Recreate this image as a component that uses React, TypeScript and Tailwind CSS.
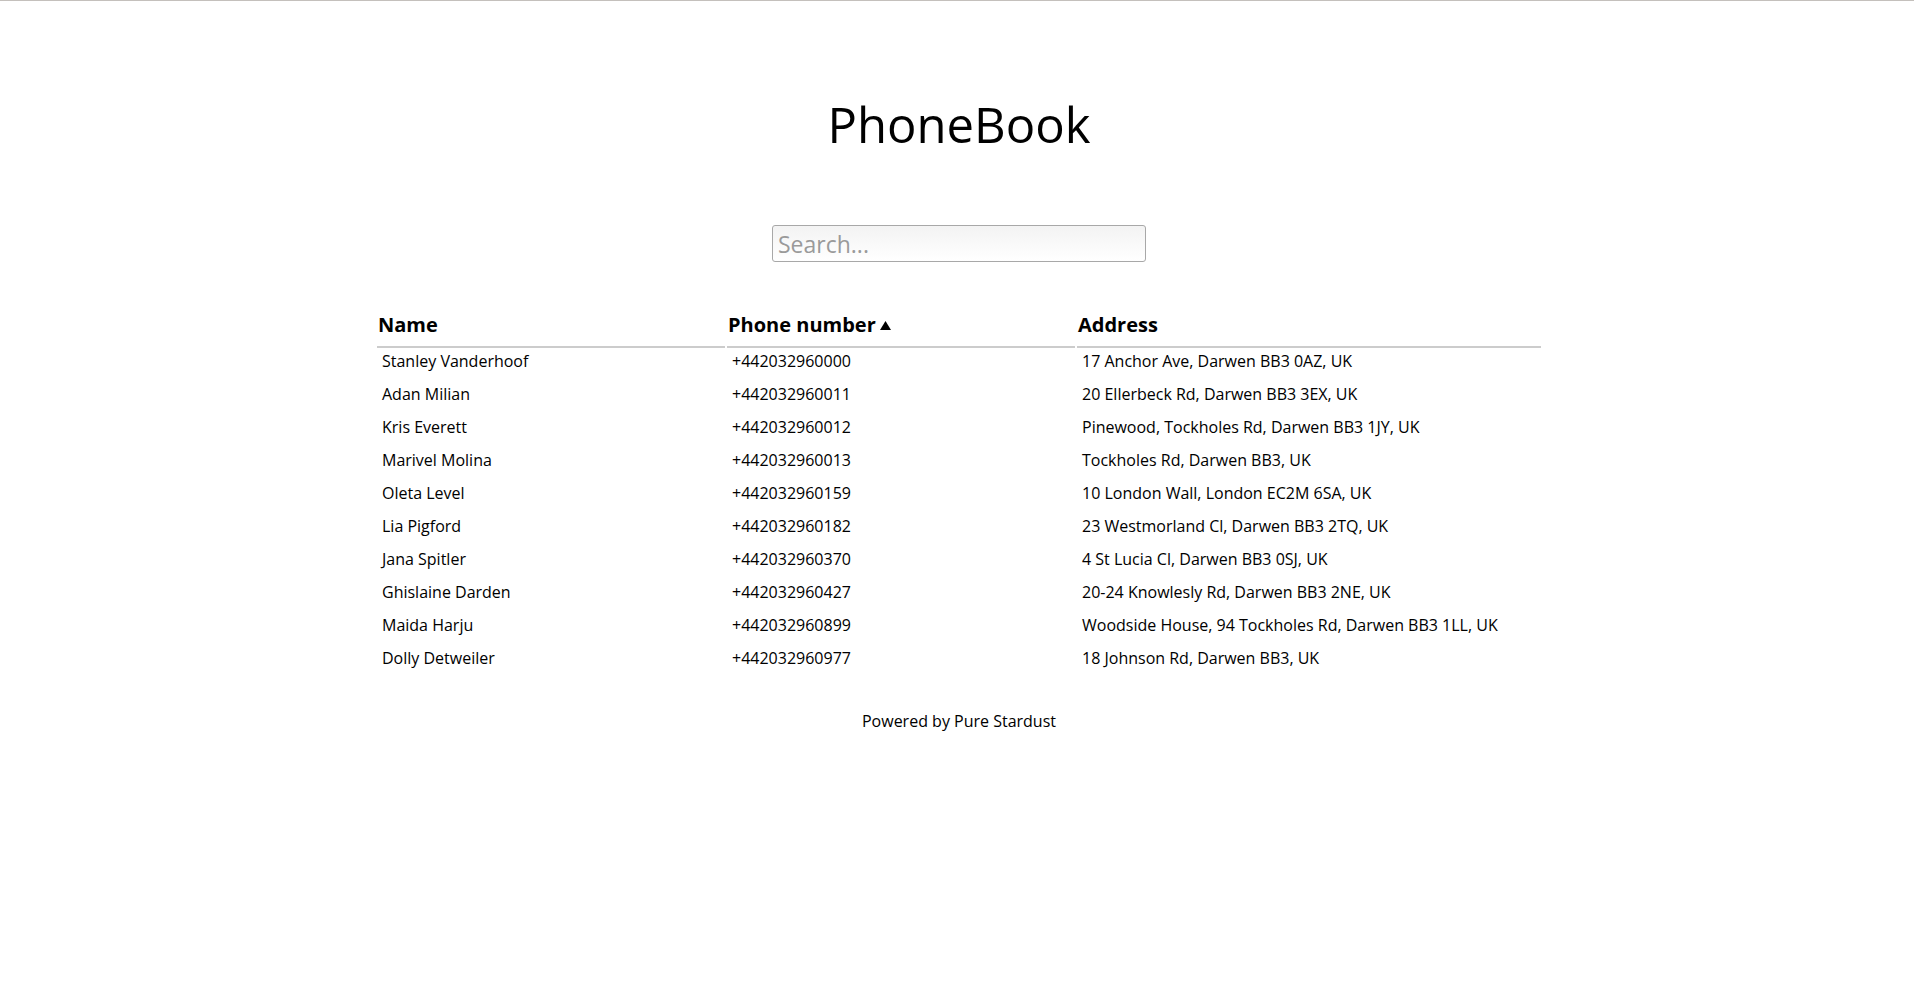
import * as React from 'react';

type Contact = { name: string; phone: string; address: string };

const contacts: Contact[] = [
  { name: 'Stanley Vanderhoof', phone: '+442032960000', address: '17 Anchor Ave, Darwen BB3 0AZ, UK' },
  { name: 'Adan Milian', phone: '+442032960011', address: '20 Ellerbeck Rd, Darwen BB3 3EX, UK' },
  { name: 'Kris Everett', phone: '+442032960012', address: 'Pinewood, Tockholes Rd, Darwen BB3 1JY, UK' },
  { name: 'Marivel Molina', phone: '+442032960013', address: 'Tockholes Rd, Darwen BB3, UK' },
  { name: 'Oleta Level', phone: '+442032960159', address: '10 London Wall, London EC2M 6SA, UK' },
  { name: 'Lia Pigford', phone: '+442032960182', address: '23 Westmorland Cl, Darwen BB3 2TQ, UK' },
  { name: 'Jana Spitler', phone: '+442032960370', address: '4 St Lucia Cl, Darwen BB3 0SJ, UK' },
  { name: 'Ghislaine Darden', phone: '+442032960427', address: '20-24 Knowlesly Rd, Darwen BB3 2NE, UK' },
  { name: 'Maida Harju', phone: '+442032960899', address: 'Woodside House, 94 Tockholes Rd, Darwen BB3 1LL, UK' },
  { name: 'Dolly Detweiler', phone: '+442032960977', address: '18 Johnson Rd, Darwen BB3, UK' },
];

const App: React.FC = () => {
  const [query, setQuery] = React.useState('');

  const rows = contacts.filter((c) =>
    (c.name + c.phone + c.address).toLowerCase().includes(query.toLowerCase())
  );

  return (
    <div className="h-[982px] overflow-hidden bg-white border-t border-[#c4c0bc] text-black font-['Open_Sans',sans-serif]">
      <div className="pl-[4px]">
        <h1 className="pt-[93px] text-center text-[49px] leading-[60px] font-normal">PhoneBook</h1>

        <div className="flex justify-center mt-[71px]">
          <input
            type="text"
            placeholder="Search..."
            value={query}
            onChange={(e) => setQuery(e.target.value)}
            className="w-[374px] h-[37px] px-[5px] border border-[#a8a8a8] rounded-[3px] bg-gradient-to-b from-[#f3f3f3] to-white text-[23px] text-[#333] placeholder:text-[#9a9a9a] outline-none"
          />
        </div>

        <table className="mx-auto mt-[45px] w-[1168px] table-fixed border-separate border-spacing-[2px]">
          <colgroup>
            <col className="w-[348px]" />
            <col className="w-[348px]" />
            <col className="w-[464px]" />
          </colgroup>
          <thead>
            <tr>
              <th className="h-[39px] pl-[1px] pt-[4px] pb-[10px] text-left text-[20px] leading-[23px] font-bold border-b-2 border-[#cccccc]">Name</th>
              <th className="h-[39px] pl-[1px] pt-[4px] pb-[10px] text-left text-[20px] leading-[23px] font-bold border-b-2 border-[#cccccc]">
                <span className="inline-flex items-center gap-[4px]">
                  Phone number
                  <svg width="11" height="9" viewBox="0 0 11 9" className="mt-[2px]">
                    <path d="M5.5 0 L11 9 L0 9 Z" fill="#000" />
                  </svg>
                </span>
              </th>
              <th className="h-[39px] pl-[1px] pt-[4px] pb-[10px] text-left text-[20px] leading-[23px] font-bold border-b-2 border-[#cccccc]">Address</th>
            </tr>
          </thead>
          <tbody>
            {rows.map((c) => (
              <tr key={c.phone}>
                <td className="pl-[5px] pt-[2px] pb-[10px] text-[16px] leading-[19px] whitespace-nowrap">{c.name}</td>
                <td className="pl-[5px] pt-[2px] pb-[10px] text-[16px] leading-[19px] whitespace-nowrap">{c.phone}</td>
                <td className="pl-[5px] pt-[2px] pb-[10px] text-[16px] leading-[19px] whitespace-nowrap">{c.address}</td>
              </tr>
            ))}
          </tbody>
        </table>

        <p className="mt-[32px] text-center text-[16px] leading-[19px]">Powered by Pure Stardust</p>
      </div>
    </div>
  );
};

export default App;
